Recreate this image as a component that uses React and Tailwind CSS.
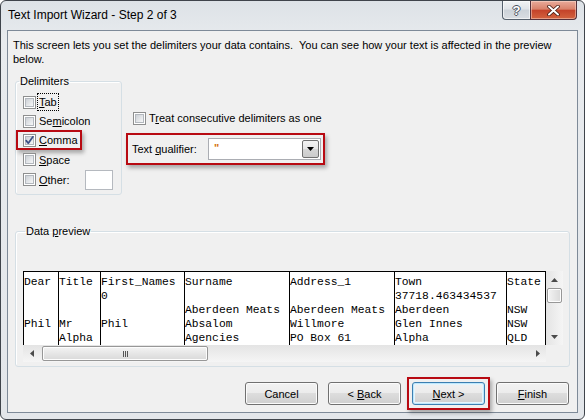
import React from "react";

const columns = [
  { width: "w-[35px]", cells: ["Dear", "", "", "Phil", ""] },
  { width: "w-[42px]", cells: ["Title", "", "", "Mr", "Alpha"] },
  { width: "w-[84px]", cells: ["First_Names", "0", "", "Phil", ""] },
  { width: "w-[105px]", cells: ["Surname", "", "Aberdeen Meats", "Absalom", "Agencies"] },
  { width: "w-[105px]", cells: ["Address_1", "", "Aberdeen Meats", "Willmore", "PO Box 61"] },
  { width: "w-[112px]", cells: ["Town", "37718.463434537", "Aberdeen", "Glen Innes", "Alpha"] },
  { width: "flex-1", cells: ["State", "", "NSW", "NSW", "QLD"] },
];

const CheckBox = ({ checked = false }) => (
  <span className="relative flex h-[13px] w-[13px] shrink-0 items-center justify-center border border-[#8e8f8f] bg-white">
    <span className="h-[9px] w-[9px] border border-[#b3b8be] bg-[linear-gradient(135deg,#cdd1d6,#f6f7f8)]" />
    {checked && (
      <svg
        className="absolute left-0 top-0"
        width="11"
        height="11"
        viewBox="0 0 11 11"
      >
        <path
          d="M2.2 5.6 L4.3 8.2 L8.9 1.8"
          fill="none"
          stroke="#3b4f86"
          strokeWidth="1.7"
          strokeLinecap="round"
          strokeLinejoin="round"
        />
      </svg>
    )}
  </span>
);

const Arrow = ({ dir }) => {
  const points = {
    up: "0,4 3.5,0 7,4",
    down: "0,0 7,0 3.5,4",
    left: "4,0 4,7 0,3.5",
    right: "0,0 4,3.5 0,7",
  }[dir];
  const size = dir === "up" || dir === "down" ? [7, 4] : [4, 7];
  return (
    <svg width={size[0]} height={size[1]} viewBox={`0 0 ${size[0]} ${size[1]}`}>
      <polygon points={points} fill="#4a4a4a" />
    </svg>
  );
};

const WinButton = ({ children, focused = false }) => (
  <button
    type="button"
    className={`flex h-[23px] w-[73px] items-center justify-center rounded-[3px] border bg-[linear-gradient(#f2f2f2_0%,#ebebeb_50%,#dddddd_50%,#cfcfcf_100%)] text-black ${
      focused
        ? "border-[#3c7fb1] shadow-[inset_0_0_0_1px_#bfe7fb,inset_0_0_0_2px_#e4f5fd]"
        : "border-[#707070] shadow-[inset_0_0_0_1px_#fbfbfb]"
    }`}
  >
    <span className="whitespace-pre">{children}</span>
  </button>
);

const RedFrame = "border-2 border-[#b80a12] shadow-[2px_3px_4px_rgba(0,0,0,0.3)]";

export default function App() {
  return (
    <div className="h-[420px] w-[585px] bg-white font-['Liberation_Sans',Arial,sans-serif]">
      <div className="flex h-[420px] w-[585px] flex-col rounded-[6px] border border-[#3f444b] bg-[linear-gradient(180deg,#dde2e7,#e8ebee_40px,#e3e6ea)]">
        {/* title bar */}
        <div className="flex h-[29px] items-start justify-between pl-[7px] pr-[7px]">
          <span className="pt-[7px] text-[12px] leading-[15px] text-black">
            Text Import Wizard - Step 2 of 3
          </span>
          <div className="flex">
            <div className="flex h-[19px] w-[28px] items-center justify-center rounded-bl-[4px] border border-t-0 border-r-0 border-[#55606d] bg-[linear-gradient(#f1f3f5,#e0e4e9_45%,#ccd2d9_50%,#d9dde2)] shadow-[inset_0_0_0_1px_rgba(255,255,255,0.6)]">
              <span className="text-[13px] font-bold leading-[13px] text-white [text-shadow:1px_0_0_#4a5360,-1px_0_0_#4a5360,0_1px_0_#4a5360,0_-1px_0_#4a5360]">
                ?
              </span>
            </div>
            <div className="flex h-[19px] w-[47px] items-center justify-center rounded-br-[4px] border border-t-0 border-[#55303a] bg-[linear-gradient(#e9ab9b,#d9826b_45%,#c4432a_52%,#d3633f)] shadow-[inset_0_0_0_1px_rgba(255,230,220,0.45)]">
              <svg width="15" height="11" viewBox="0 0 15 11">
                <path d="M3 1.5 L12 9.5 M12 1.5 L3 9.5" stroke="#40170f" strokeWidth="3.6" strokeLinecap="round" />
                <path d="M3 1.5 L12 9.5 M12 1.5 L3 9.5" stroke="#ffffff" strokeWidth="2" strokeLinecap="round" />
              </svg>
            </div>
          </div>
        </div>

        {/* client area */}
        <div className="mx-[6px] flex h-[383px] flex-col border border-[#7e8a98] bg-[#f0f0f0] text-[11px] leading-[14px] text-black">
          <p className="ml-[5px] mt-[7px] whitespace-pre">
            {"This screen lets you set the delimiters your data contains.  You can see how your text is affected in the preview\nbelow."}
          </p>

          <div className="mt-[8px] flex items-start">
            <fieldset className="ml-[7px] w-[107px] rounded-[3px] border border-[#d5dfe5] pb-[4px] pt-[4px] shadow-[inset_1px_1px_0_#ffffff]">
              <legend className="ml-[3px] px-[1px] leading-[14px]">Delimiters</legend>
              <div className="flex h-[20px] items-center gap-[3px] pl-[7px]">
                <CheckBox />
                <span className="outline-1 outline-offset-[1px] outline-dotted outline-black">
                  <u>T</u>ab
                </span>
              </div>
              <div className="flex h-[18px] items-center gap-[3px] pl-[7px]">
                <CheckBox />
                <span>
                  Se<u>m</u>icolon
                </span>
              </div>
              <div className={`flex h-[20px] w-[66px] items-center gap-[3px] pl-[5px] ${RedFrame}`}>
                <CheckBox checked />
                <span>
                  <u>C</u>omma
                </span>
              </div>
              <div className="flex h-[19px] items-center gap-[3px] pl-[7px]">
                <CheckBox />
                <span>
                  <u>S</u>pace
                </span>
              </div>
              <div className="flex h-[21px] items-center gap-[3px] pl-[7px]">
                <CheckBox />
                <span className="w-[43px]">
                  <u>O</u>ther:
                </span>
                <span className="h-[20px] w-[28px] border border-[#b5b9bf] bg-white" />
              </div>
            </fieldset>

            <div className="ml-[4px] flex flex-col">
              <div className="mt-[36px] flex h-[16px] items-center gap-[3px] pl-[7px]">
                <CheckBox />
                <span>
                  T<u>r</u>eat consecutive delimiters as one
                </span>
              </div>
              <div className={`mt-[7px] flex h-[32px] w-[199px] items-center justify-between pl-[4px] pr-[2px] ${RedFrame}`}>
                <span>
                  Text <u>q</u>ualifier:
                </span>
                <div className="flex h-[22px] w-[113px] items-start justify-between border border-[#abadb3] bg-white">
                  <span className="pl-[5px] pt-[2px] text-[11px] font-bold leading-[14px] text-[#d4700c]">"</span>
                  <span className="mr-[1px] mt-[1px] flex h-[18px] w-[17px] items-center justify-center rounded-[2px] border border-[#707070] bg-[linear-gradient(#f3f3f3,#e6e6e6_50%,#d6d6d6_50%,#cbcbcb)]">
                    <svg width="7" height="4" viewBox="0 0 7 4">
                      <polygon points="0,0 7,0 3.5,4" fill="#000000" />
                    </svg>
                  </span>
                </div>
              </div>
            </div>
          </div>

          <fieldset className="ml-[7px] mt-[29px] w-[555px] rounded-[3px] border border-[#d5dfe5] pb-[4px] pl-[7px] pt-[33px] shadow-[inset_1px_1px_0_#ffffff]">
            <legend className="ml-[2px] px-[1px] leading-[14px]">
              Data <u>p</u>review
            </legend>
            <div className="flex flex-col">
              <div className="flex">
                <div className="flex h-[74px] w-[523px] overflow-hidden border-r border-t border-black bg-white font-['Liberation_Mono','Courier_New',monospace] text-[11.3px] leading-[14px]">
                  {columns.map((col) => (
                    <div
                      key={col.cells[0]}
                      className={`${col.width} flex shrink-0 flex-col overflow-hidden border-l border-black pt-[3px]`}
                    >
                      {col.cells.map((cell, i) => (
                        <span key={i} className="h-[14px] whitespace-pre">
                          {cell}
                        </span>
                      ))}
                    </div>
                  ))}
                </div>
                <div className="flex h-[74px] w-[17px] flex-col bg-[linear-gradient(90deg,#e4e4e4,#f5f5f5)]">
                  <div className="flex h-[17px] items-center justify-center">
                    <Arrow dir="up" />
                  </div>
                  <div className="mx-[1px] h-[15px] rounded-[2px] border border-[#979797] bg-[linear-gradient(90deg,#f4f4f4,#e6e6e6_50%,#d9d9d9)] shadow-[inset_0_0_0_1px_#fdfdfd]" />
                  <div className="flex-1" />
                  <div className="flex h-[17px] items-center justify-center">
                    <Arrow dir="down" />
                  </div>
                </div>
              </div>
              <div className="flex">
                <div className="flex h-[17px] w-[523px] items-center bg-[linear-gradient(180deg,#e4e4e4,#f5f5f5)]">
                  <div className="flex h-[17px] w-[17px] items-center justify-center">
                    <Arrow dir="left" />
                  </div>
                  <div className="ml-[2px] flex h-[15px] w-[166px] items-center justify-center gap-[1px] rounded-[2px] border border-[#979797] bg-[linear-gradient(180deg,#f4f4f4,#e6e6e6_50%,#d9d9d9)] shadow-[inset_0_0_0_1px_#fdfdfd]">
                    <span className="h-[6px] w-[1px] bg-[#555555]" />
                    <span className="h-[6px] w-[1px] bg-[#555555]" />
                    <span className="h-[6px] w-[1px] bg-[#555555]" />
                  </div>
                  <div className="flex-1" />
                  <div className="flex h-[17px] w-[17px] items-center justify-center">
                    <Arrow dir="right" />
                  </div>
                </div>
                <div className="h-[17px] w-[17px] bg-[#f0f0f0]" />
              </div>
            </div>
          </fieldset>

          <div className="mt-[15px] flex justify-end pr-[8px]">
            <WinButton>Cancel</WinButton>
            <div className="ml-[10px]">
              <WinButton>
                &lt; <u>B</u>ack
              </WinButton>
            </div>
            <div className={`-my-[5px] ml-[6px] p-[3px] ${RedFrame}`}>
              <WinButton focused>
                <u>N</u>ext &gt;
              </WinButton>
            </div>
            <div className="ml-[6px]">
              <WinButton>
                <u>F</u>inish
              </WinButton>
            </div>
          </div>
        </div>
      </div>
    </div>
  );
}
